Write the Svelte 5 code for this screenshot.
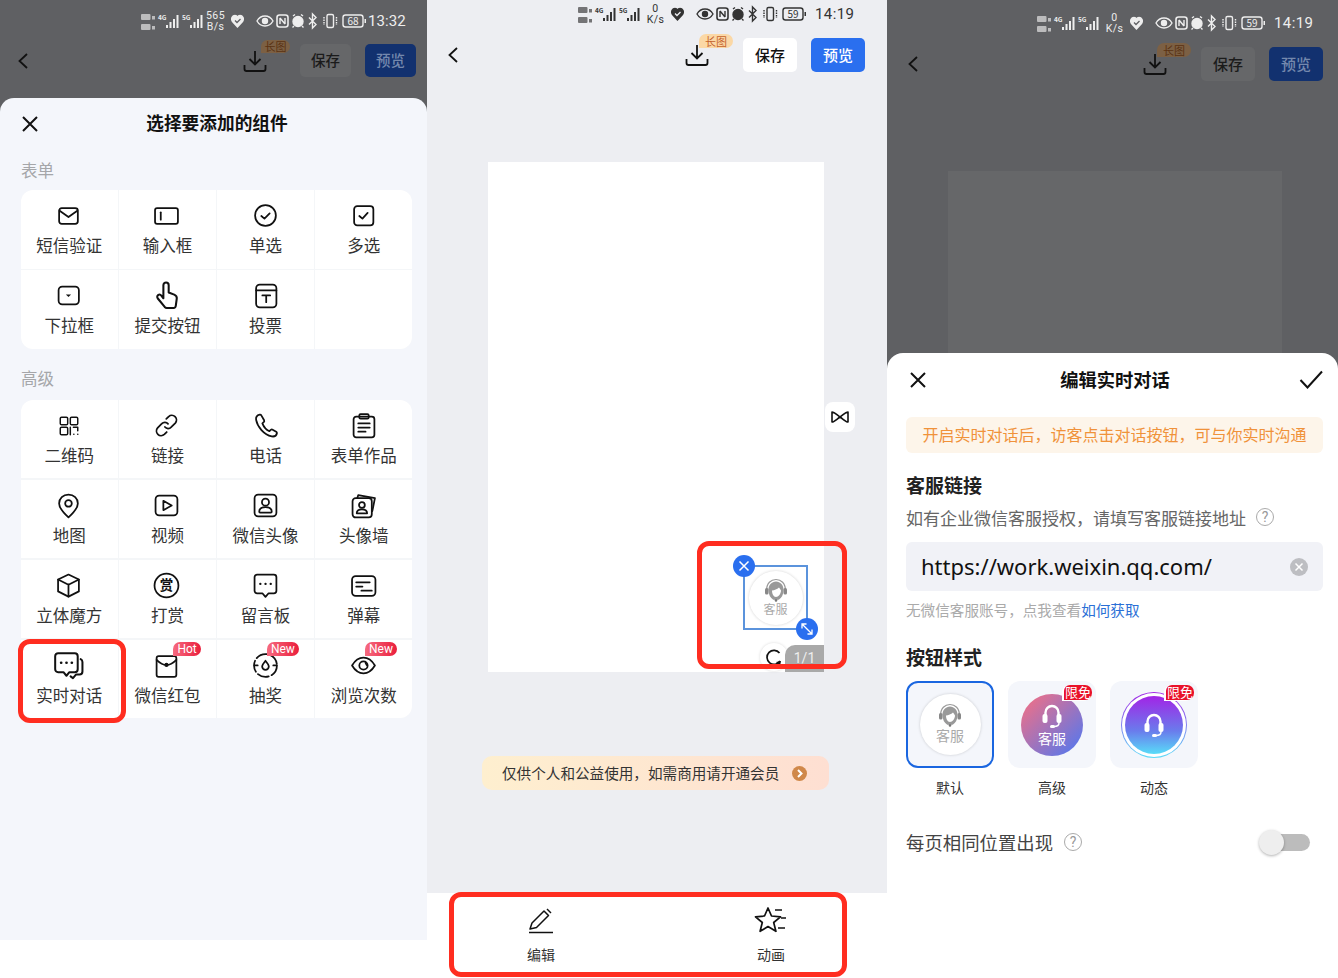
<script>
	const icons = {
		mail: '<rect x="3" y="5" width="18" height="15" rx="2.5"/><path d="M3.5 7.5l8.5 6 8.500-6"/>',
		input: '<rect x="1" y="5" width="22" height="15" rx="2"/><path d="M6.500 9v7"/>',
		radio: '<circle cx="12" cy="12" r="10"/><path d="M8 12.500l3 2.500 5-5"/>',
		check: '<rect x="3" y="3" width="18.500" height="18.500" rx="3"/><path d="M8 12.500l3 2.500 5-5.500"/>',
		select: '<rect x="2.500" y="3.500" width="19.500" height="17" rx="3.500"/><path d="M9.500 11h5l-2.500 2.500z" fill="currentColor" stroke="none"/>',
		hand: '<g transform="translate(-2 -2.500) scale(1.160)"><path d="M9.500 4a2.200 2.200 0 0 1 4.400 0v6l4.600 1.800c1.600.7 2.300 1.800 2.100 3.200l-.8 6c-.1 1.100-.9 1.800-1.900 1.800h-5.600c-.7 0-1.200-.3-1.700-.8l-5.700-7c-.8-1-.6-2.200.2-2.800s2-.5 2.700.4l1.700 2.200z"/></g>',
		vote: '<rect x="3" y="1.500" width="19.500" height="22" rx="3.500"/><path d="M3 7h19.500M9 12h7.500M12.700 12v6.500"/>',
		qr: '<g transform="translate(2 2) scale(.84)"><rect x="2.500" y="2.500" width="8.500" height="8.500" rx="1.500"/><rect x="14" y="2.500" width="8.500" height="8.500" rx="1.500"/><rect x="2.500" y="14" width="8.500" height="8.500" rx="1.500"/><path d="M14 14v8.500M17.500 14h5v4M18 22h.1M22.500 22h.1"/></g>',
		link: '<path d="M10.500 13.500a4 4 0 0 0 6 .2l4-4a4.500 4.500 0 0 0-6.400-6.300L11.800 5.700"/><path d="M13.500 10.500a4 4 0 0 0-6-.2l-4 4a4.500 4.500 0 0 0 6.400 6.300l2.300-2.300"/>',
		phone: '<path d="M6.500 1.500C4 2 2.500 3.700 3 6.700 4.200 13.200 10.500 21 18 22.500c2.700.4 4.600-1 5-3 .1-.7-.1-1.100-.7-1.500l-3.400-2c-.7-.4-1.200-.3-1.800.2l-1.300 1.300c-2.800-1.200-5.700-4.700-6.800-7.500l1.500-1.400c.4-.5.500-1 .2-1.600L8 2.300C7.700 1.700 7.200 1.400 6.500 1.500z"/>',
		clip: '<rect x="2.500" y="3.500" width="20" height="20" rx="2.500"/><rect x="8" y="1" width="9" height="4.500" rx="1.200"/><path d="M7 10h11M7 14h11M7 18h7"/>',
		pin: '<path d="M12 1.500C6.800 1.500 3 5.400 3 10c0 4.800 4.500 9.300 9 13.500 4.500-4.200 9-8.700 9-13.500 0-4.600-3.800-8.500-9-8.500z"/><circle cx="12" cy="10" r="3.200"/>',
		video: '<rect x="1.500" y="2.500" width="21" height="19" rx="3.500"/><path d="M9 7.500l8 4.500-8 4.500z"/>',
		avatar: '<rect x="1.500" y="1.500" width="21" height="21" rx="3.500"/><circle cx="12" cy="8.800" r="3.400"/><path d="M6 18c0-3 2.500-4.500 6-4.500s6 1.500 6 4.500c0 .5-.4.8-.8.8H6.800c-.4 0-.8-.3-.8-.8z"/>',
		wall: '<rect x="1.500" y="5" width="18.500" height="18.500" rx="3"/><path d="M6 5l1-3 16 3-2.500 12.500"/><circle cx="10.500" cy="11.500" r="2.800"/><path d="M5.500 19.500c0-2.500 2-3.700 5-3.700s5 1.200 5 3.700z"/>',
		cube: '<path d="M12 1.500l10 4.800v11.400l-10 5-10-5V6.300z"/><path d="M2 6.300l10 5 10-5M12 11.300v11.400"/>',
		reward: '<circle cx="12" cy="12" r="11.500"/><text x="12" y="16.500" font-size="13" text-anchor="middle" fill="currentColor" stroke="none" font-weight="700">赏</text>',
		msg: '<path d="M4 1.500h16c1.400 0 2.500 1.100 2.500 2.500v13c0 1.400-1.100 2.500-2.500 2.500h-5L12 23l-3-3.500H4c-1.400 0-2.500-1.100-2.500-2.500V4C1.500 2.600 2.600 1.500 4 1.500z"/><path d="M7 10.500h.1M12 10.500h.1M17 10.500h.1" stroke-width="2.200"/>',
		danmu: '<rect x="1" y="3" width="22.500" height="19" rx="3.500"/><path d="M5 9h13M5 13h6M10 17h10"/>',
		chat: '<g transform="translate(-2.500 -1.500) scale(1.140)"><path d="M4 1.500h14c1.400 0 2.500 1.100 2.500 2.500v11c0 1.400-1.100 2.500-2.500 2.500h-4.500L11 20.500l-2.500-3H4c-1.400 0-2.500-1.100-2.500-2.500V4C1.500 2.600 2.600 1.500 4 1.500z"/><path d="M6.500 9.500h.1M11 9.500h.1M15.500 9.500h.1" stroke-width="2.200"/><path d="M23 6.500c1 .5 1.500 1.300 1.500 2.500v8c0 1.400-1 2.500-2.500 2.500h-3l-2.500 3-2-1.500"/></g>',
		packet: '<path d="M4.500 3h15c1.100 0 2 .9 2 2v16c0 1.100-.9 2-2 2h-15c-1.100 0-2-.9-2-2V5c0-1.100.9-2 2-2z"/><path d="M2.500 6.500C6 10 9 11.500 12 11.500S18 10 21.500 6.500"/><circle cx="12" cy="11.500" r="1.200" fill="currentColor"/>',
		lottery: '<circle cx="12" cy="12" r="11" stroke-dasharray="11 3"/><path d="M12 7.500c-2 2.400-3.200 3.800-3.200 5.500a3.200 3.200 0 0 0 6.400 0c0-1.700-1.200-3.100-3.200-5.500z"/><path d="M1.500 12h3M19.500 12h3"/>',
		eye: '<path d="M1 12c3-5 6.800-7.500 11-7.500S20 7 23 12c-3 5-6.800 7.500-11 7.500S4 17 1 12z"/><circle cx="12" cy="12" r="4"/><path d="M14 9.500l1 2"/>'
	};

	const formItems = [
		{ icon: 'mail', label: '短信验证' },
		{ icon: 'input', label: '输入框' },
		{ icon: 'radio', label: '单选' },
		{ icon: 'check', label: '多选' },
		{ icon: 'select', label: '下拉框' },
		{ icon: 'hand', label: '提交按钮' },
		{ icon: 'vote', label: '投票' },
		{ icon: '', label: '' }
	];

	const advancedItems = [
		{ icon: 'qr', label: '二维码' },
		{ icon: 'link', label: '链接' },
		{ icon: 'phone', label: '电话' },
		{ icon: 'clip', label: '表单作品' },
		{ icon: 'pin', label: '地图' },
		{ icon: 'video', label: '视频' },
		{ icon: 'avatar', label: '微信头像' },
		{ icon: 'wall', label: '头像墙' },
		{ icon: 'cube', label: '立体魔方' },
		{ icon: 'reward', label: '打赏' },
		{ icon: 'msg', label: '留言板' },
		{ icon: 'danmu', label: '弹幕' },
		{ icon: 'chat', label: '实时对话' },
		{ icon: 'packet', label: '微信红包', tag: 'Hot' },
		{ icon: 'lottery', label: '抽奖', tag: 'New' },
		{ icon: 'eye', label: '浏览次数', tag: 'New' }
	];
</script>

{#snippet statusBar(cls, top, bottom, batt, time)}
	<div class="status {cls}">
		<svg class="sig" width="62" height="20" viewBox="0 0 62 20" fill="currentColor">
			<rect x="0" y="3" width="9.500" height="6" rx="1" opacity=".65" />
			<rect x="11" y="5" width="3" height="3.500" opacity=".65" />
			<rect x="0" y="13" width="9.500" height="6" rx="1" opacity=".65" />
			<rect x="11" y="15" width="3" height="3.500" opacity=".65" />
			<text x="17" y="9" font-size="6.500" font-weight="700">4G</text>
			<rect x="25" y="14" width="2" height="3" /><rect x="28.500" y="11" width="2" height="6" /><rect x="32" y="8" width="2" height="9" /><rect x="35.500" y="4" width="2" height="13" />
			<text x="41" y="9" font-size="6.500" font-weight="700">5G</text>
			<rect x="49" y="14" width="2" height="3" /><rect x="52.500" y="11" width="2" height="6" /><rect x="56" y="8" width="2" height="9" /><rect x="59.500" y="4" width="2" height="13" />
		</svg>
		<span class="speed"><span>{top}</span><span>{bottom}</span></span>
		<svg class="rest" width="136" height="20" viewBox="0 0 136 20" fill="none" stroke="currentColor" stroke-width="1.400">
			<path d="M6.500 16L1.500 10.500C-.5 7.500 1.500 4.500 4 4.500c1 0 2 .5 2.500 1.500.5-1 1.500-1.500 2.500-1.500 2.500 0 4.500 3 2.500 6z" fill="currentColor" />
			<path d="M4 9.500l2 2 3.500-3.500" stroke-width="1.300" class="heart-check" />
			<path d="M26 10c2-3.500 4.800-5 8-5s6 1.500 8 5c-2 3.500-4.800 5-8 5s-6-1.500-8-5z" />
			<circle cx="34" cy="10" r="2.500" fill="currentColor" />
			<rect x="46" y="4" width="11" height="12" rx="2.500" stroke-width="1.600" />
			<path d="M49 7v6M54 7v6M49 7l5 6" />
			<circle cx="67" cy="10.500" r="5" fill="currentColor" />
			<path d="M62 5l2-1.500M72 5l-2-1.500M63 15l-1.500 1.500M71 15l1.500 1.500" />
			<path d="M78 6.500l7 7-3.500 3.500V3l3.500 3.500-7 7" />
			<rect x="96" y="3.500" width="6.500" height="13" rx="1.500" />
			<path d="M93 6v8M105.500 6v8" stroke-dasharray="1.500 1" />
			<rect x="112" y="4" width="20" height="12" rx="2.500" />
			<rect x="133.500" y="8" width="1.500" height="4" fill="currentColor" stroke="none" />
			<text x="122" y="13.500" font-size="10" text-anchor="middle" fill="currentColor" stroke="none">{batt}</text>
		</svg>
		<span class="time">{time}</span>
	</div>
{/snippet}

{#snippet appHead(cls)}
	<div class="head {cls}">
		<svg class="back" width="12" height="18" viewBox="0 0 12 18" fill="none" stroke="currentColor" stroke-width="1.800"><path d="M10 2L2.500 9l7.500 7" /></svg>
		<div class="dl">
			<svg width="24" height="24" viewBox="0 0 24 24" fill="none" stroke="currentColor" stroke-width="1.800"><path d="M12 2v13M6.500 10l5.500 5.500 5.500-5.500M1.500 16v4c0 1.200.8 2 2 2h17c1.200 0 2-.8 2-2v-4" /></svg>
			<span class="long">长图</span>
		</div>
		<span class="btn save">保存</span>
		<span class="btn preview">预览</span>
	</div>
{/snippet}

{#snippet widgetGrid(items)}
	<div class="grid">
		{#each items as item}
			<div class="cell">
				{#if item.icon}
					<svg class="cell-icon" width="26" height="26" viewBox="0 0 25 25" fill="none" stroke="currentColor" stroke-width="1.700" stroke-linecap="round" stroke-linejoin="round">{@html icons[item.icon]}</svg>
					<span>{item.label}</span>
				{/if}
				{#if item.tag}
					<em class="tag">{item.tag}</em>
				{/if}
			</div>
		{/each}
	</div>
{/snippet}

{#snippet agent(size)}
	<div class="agent" style="width:{size}px;height:{size}px">
		<svg width="26" height="24" viewBox="0 0 26 24">
			<path d="M3.500 13C3.500 5 8 1.500 13 1.500s9.500 3.500 9.500 11.500" fill="none" stroke="#999" stroke-width="1.200" />
			<path d="M5.500 13C5 7 9 3.500 13 3.500s8 3.500 7.500 9.500c-.3 4-2 7-4.500 8.500-1 .6-5 .6-6 0-2.500-1.500-4.200-4.500-4.500-8.500z" fill="#999" />
			<path d="M9 12.500c2.500-.2 5-1.200 7-3 .8 1 1.500 2 2 3 0 3-2.500 6.500-5 6.500s-4-3-4-6.500z" fill="#fff" />
			<rect x="2" y="10" width="3.500" height="6.500" rx="1.500" fill="#888" />
			<rect x="20.500" y="10" width="3.500" height="6.500" rx="1.500" fill="#888" />
			<circle cx="13" cy="22.500" r="1.300" fill="#777" />
		</svg>
		<span>客服</span>
	</div>
{/snippet}

{#snippet headset(size)}
	<svg width={size} height={size} viewBox="0 0 26 26" fill="none">
		<path d="M6.500 12V9.500a6.500 6.500 0 0 1 13 0V12" stroke="#fff" stroke-width="2.400" />
		<rect x="3.500" y="11" width="5" height="9" rx="2" fill="#fff" />
		<rect x="17.500" y="11" width="5" height="9" rx="2" fill="#fff" />
		<path d="M20 20c0 2.500-2 3.500-5 3.500" stroke="#fff" stroke-width="1.500" />
		<rect x="11" y="22" width="5" height="3" rx="1.500" fill="#fff" />
	</svg>
{/snippet}

<div class="screen">
	<section class="phone p1">
		<div class="dim">
			{@render statusBar('s1', '565', 'B/s', '68', '13:32')}
			{@render appHead('h1')}
		</div>
		<div class="sheet-list">
			<div class="list-title">
				<svg width="20" height="20" viewBox="0 0 20 20" fill="none" stroke="#111" stroke-width="2"><path d="M3 3l14 14M17 3L3 17" /></svg>
				<h2>选择要添加的组件</h2>
			</div>
			<h3>表单</h3>
			{@render widgetGrid(formItems)}
			<h3 class="second">高级</h3>
			{@render widgetGrid(advancedItems)}
			<div class="mark mark-chat"></div>
		</div>
	</section>

	<section class="phone p2">
		{@render statusBar('s2', '0', 'K/s', '59', '14:19')}
		{@render appHead('h2')}
		<div class="canvas">
			<div class="float-btn">
				<svg width="20" height="14" viewBox="0 0 20 14" fill="none" stroke="#111" stroke-width="1.600" stroke-linejoin="round"><path d="M2 2c2.500 0 5 3 8 5 3-2 5.500-5 8-5v10c-2.500 0-5-3-8-5-3 2-5.500 5-8 5z" /></svg>
			</div>
			<div class="selection">
				{@render agent(54)}
				<span class="handle close">
					<svg width="12" height="12" viewBox="0 0 12 12" stroke="#fff" stroke-width="1.500"><path d="M1.500 1.500l9 9M10.500 1.500l-9 9" /></svg>
				</span>
				<span class="handle resize">
					<svg width="14" height="14" viewBox="0 0 14 14" fill="none" stroke="#fff" stroke-width="1.300"><path d="M2 2l10 10M2 6.500V2h4.500M12 7.500V12H7.500" /></svg>
				</span>
			</div>
			<span class="rotate">
				<svg width="20" height="20" viewBox="0 0 20 20" fill="none" stroke="#111" stroke-width="1.700"><path d="M15.500 6A7 7 0 1 0 16 14" /><path d="M12 15l5-1-1 5z" fill="#111" stroke="none" /></svg>
			</span>
			<span class="pager">1/1</span>
		</div>
		<div class="notice-vip">
			<span>仅供个人和公益使用，如需商用请开通会员</span>
			<svg width="15" height="15" viewBox="0 0 15 15"><circle cx="7.500" cy="7.500" r="7.500" fill="#d0884a" /><path d="M6 4l3.500 3.500L6 11" fill="none" stroke="#fff" stroke-width="2" /></svg>
		</div>
		<div class="tools">
			<div class="tool">
				<svg width="28" height="28" viewBox="0 0 28 28" fill="none" stroke="#111" stroke-width="1.500" stroke-linejoin="round"><path d="M3 23l2-6L17 5l4.500 4.500L9.500 21.500z" /><path d="M20 3l4 4" /><path d="M2 26.500h24" /></svg>
				<span>编辑</span>
			</div>
			<div class="tool">
				<svg width="34" height="28" viewBox="0 0 34 28" fill="none" stroke="#111" stroke-width="1.700" stroke-linejoin="round"><path d="M14 2l3.500 8 9 .8-6.800 5.700 2.200 8.800L14 20.500 6.100 25.300l2.200-8.800L1.500 10.800l9-.8z" /><path d="M21 4h7M27 12h5M24 22h7" /></svg>
				<span>动画</span>
			</div>
			<div class="mark mark-tools"></div>
		</div>
		<div class="mark mark-selection"></div>
	</section>

	<section class="phone p3">
		<div class="dim">
			{@render statusBar('s3', '0', 'K/s', '59', '14:19')}
			{@render appHead('h3')}
			<div class="canvas-dim"></div>
		</div>
		<div class="sheet-edit">
			<div class="edit-title">
				<svg width="20" height="20" viewBox="0 0 20 20" fill="none" stroke="#111" stroke-width="2"><path d="M3 3l14 14M17 3L3 17" /></svg>
				<h2>编辑实时对话</h2>
				<svg width="24" height="20" viewBox="0 0 24 20" fill="none" stroke="#111" stroke-width="2"><path d="M1.500 10l7 7.500L23 1.500" /></svg>
			</div>
			<p class="tip">开启实时对话后，访客点击对话按钮，可与你实时沟通</p>
			<h4>客服链接</h4>
			<div class="desc">
				<span>如有企业微信客服授权，请填写客服链接地址</span>
				<span class="help">?</span>
			</div>
			<div class="url-field">
				<span>https://work.weixin.qq.com/</span>
				<svg width="18" height="18" viewBox="0 0 18 18"><circle cx="9" cy="9" r="9" fill="#bdbec2" /><path d="M5.500 5.500l7 7M12.500 5.500l-7 7" stroke="#fff" stroke-width="1.500" /></svg>
			</div>
			<p class="hint">无微信客服账号，点我查看<a href="#top">如何获取</a></p>
			<h4 class="style-title">按钮样式</h4>
			<div class="styles">
				<div class="style-opt">
					<div class="tile active">{@render agent(61)}</div>
					<span>默认</span>
				</div>
				<div class="style-opt">
					<div class="tile">
						<div class="round grad">
							{@render headset(26)}
							<span>客服</span>
						</div>
						<em class="free">限免</em>
					</div>
					<span>高级</span>
				</div>
				<div class="style-opt">
					<div class="tile">
						<div class="ring">
							<div class="round dyn">{@render headset(26)}</div>
						</div>
						<em class="free">限免</em>
					</div>
					<span>动态</span>
				</div>
			</div>
			<div class="same-pos">
				<span>每页相同位置出现</span>
				<span class="help">?</span>
				<div class="toggle"><i></i></div>
			</div>
		</div>
	</section>
</div>

<style>
	:global(body) {
		margin: 0;
		background: #fff;
	}
	.screen {
		display: flex;
		width: 1338px;
		height: 978px;
		overflow: hidden;
		font-family: 'Noto Sans CJK SC', 'Noto Sans', sans-serif;
		color: #222;
	}
	.phone {
		position: relative;
		display: flex;
		flex-direction: column;
		height: 978px;
		box-sizing: border-box;
	}
	.p1 {
		width: 427px;
		background: #fff;
	}
	.p2 {
		width: 460px;
		background: #edeef2;
	}
	.p3 {
		width: 451px;
		background: #fff;
	}
	.dim {
		background: #5f6063;
		display: flow-root;
	}

	/* status bar */
	.status {
		display: flex;
		align-items: center;
		color: #eee;
	}
	.s1 {
		height: 42px;
		padding-left: 141px;
	}
	.s2 {
		height: 28px;
		padding-left: 151px;
		color: #333;
	}
	.s3 {
		height: 46px;
		padding-left: 150px;
	}
	.speed {
		display: flex;
		flex-direction: column;
		align-items: center;
		width: 17px;
		margin-left: 4px;
		font: 10.500px/11px Roboto, sans-serif;
		letter-spacing: 0.4px;
	}
	.s2 .speed,
	.s3 .speed {
		margin-left: 7px;
	}
	.rest {
		margin-left: 7px;
	}
	.heart-check {
		stroke: #5f6063;
	}
	.s2 .heart-check {
		stroke: #edeef2;
	}
	.time {
		margin-left: 1px;
		font: 15px Roboto, sans-serif;
		letter-spacing: 0.1px;
	}
	.s2 .time,
	.s3 .time {
		margin-left: 8px;
		letter-spacing: 0.4px;
	}

	/* app header */
	.head {
		display: flex;
		align-items: center;
		height: 34px;
		color: #111;
	}
	.back {
		flex: none;
		margin-right: auto;
	}
	.dl {
		position: relative;
		height: 24px;
		line-height: 0;
	}
	.long {
		position: absolute;
		left: 14px;
		top: -9px;
		width: 34px;
		height: 14px;
		border-radius: 7px 7px 7px 0;
		background: #fbd8a6;
		color: #c5622c;
		font-size: 11px;
		line-height: 14px;
		text-align: center;
	}
	.btn {
		height: 34px;
		width: 54px;
		border-radius: 5px;
		margin-left: 14px;
		font-size: 15px;
		font-weight: 500;
		line-height: 33px;
		text-align: center;
	}
	.save {
		background: #fff;
		margin-left: 34px;
	}
	.preview {
		background: #2a6fef;
		color: #fff;
	}
	.h1 .save,
	.h3 .save {
		background: #666769;
		color: #1b1b1b;
	}
	.h1 .preview,
	.h3 .preview {
		background: #12316f;
		color: #7488ad;
	}
	.h1 .long,
	.h3 .long {
		background: #7c6044;
		color: #5a3212;
	}
	.h1 {
		margin: 2px 0 35px;
		padding: 0 11px 0 17px;
		height: 33px;
	}
	.h1 .btn {
		width: 51px;
		height: 33px;
		line-height: 32px;
		font-size: 14.500px;
	}
	.h1 .save {
		margin-left: 33px;
	}
	.h1 .long {
		width: 29px;
		left: 18px;
		top: -9px;
		height: 13px;
		line-height: 13px;
	}
	.h2 {
		margin-top: 10px;
		padding: 0 22px 0 20px;
	}
	.h3 {
		margin-top: 1px;
		padding: 0 15px 0 20px;
	}

	/* component picker */
	.sheet-list {
		height: 842px;
		margin-top: -14px;
		box-sizing: border-box;
		padding: 0 15px 0 21px;
		background: #f4f6fb;
		border-radius: 14px 14px 0 0;
	}
	.list-title {
		position: relative;
		display: flex;
		align-items: center;
		justify-content: center;
		height: 52px;
		margin-left: -1px;
	}
	.list-title svg {
		position: absolute;
		left: 0;
	}
	.list-title h2 {
		margin: 0 0 0 2px;
		padding-bottom: 4px;
		font-size: 17.700px;
		font-weight: 700;
		color: #111;
	}
	h3 {
		margin: 10px 0 9px;
		height: 21px;
		font-size: 16.500px;
		font-weight: 400;
		line-height: 21px;
		color: #a5a6a9;
	}
	h3.second {
		margin: 19px 0 11px;
	}
	.grid {
		display: grid;
		grid-template-columns: repeat(4, 1fr);
		gap: 1.500px;
		background: #f4f6f8;
		border-radius: 12px;
		overflow: hidden;
	}
	.cell {
		position: relative;
		display: flex;
		flex-direction: column;
		align-items: center;
		height: 78.500px;
		background: #fff;
		font-size: 16.500px;
		color: #333;
	}
	.cell-icon {
		margin-top: 13px;
		color: #111;
		overflow: visible;
	}
	.cell span {
		margin-top: 4px;
		line-height: 24px;
	}
	.tag {
		position: absolute;
		right: 15px;
		top: 2px;
		height: 14px;
		padding: 0 4px;
		border-radius: 7px 7px 7px 0;
		background: linear-gradient(90deg, #f66a80, #ea1f3c);
		color: #fff;
		font: 400 12px/14px Roboto, sans-serif;
		font-style: normal;
	}
	.mark {
		position: absolute;
		box-sizing: border-box;
		border: 5.500px solid #ff2d20;
		border-radius: 12px;
		pointer-events: none;
	}
	.mark-chat {
		left: 18px;
		top: 639px;
		width: 108px;
		height: 84px;
	}

	/* editor */
	.canvas {
		position: relative;
		width: 336px;
		height: 510px;
		margin: 90px 0 0 61px;
		background: #fff;
	}
	.float-btn {
		position: absolute;
		left: 337px;
		top: 240px;
		display: flex;
		align-items: center;
		justify-content: center;
		width: 30px;
		height: 30px;
		border-radius: 8px;
		background: #fff;
	}
	.selection {
		position: absolute;
		left: 255px;
		top: 403px;
		display: flex;
		align-items: center;
		justify-content: center;
		box-sizing: border-box;
		width: 65px;
		height: 65px;
		border: 2px solid #5b93dc;
	}
	.agent {
		flex: none;
		display: flex;
		flex-direction: column;
		align-items: center;
		justify-content: center;
		box-sizing: border-box;
		border-radius: 50%;
		background: #fff;
		box-shadow: 0 0 3px rgba(0, 0, 0, 0.18);
		color: #aaa;
		font-size: 12px;
		line-height: 14px;
	}
	.agent svg {
		margin-top: -1px;
	}
	.tile .agent {
		font-size: 14px;
		line-height: 17px;
		padding-bottom: 1px;
	}
	.handle {
		position: absolute;
		display: flex;
		align-items: center;
		justify-content: center;
		width: 22px;
		height: 22px;
		border-radius: 50%;
		background: #2a6fef;
	}
	.close {
		left: -12px;
		top: -12px;
	}
	.resize {
		right: -12px;
		bottom: -12px;
	}
	.rotate {
		position: absolute;
		left: 272px;
		top: 481px;
		display: flex;
		align-items: center;
		justify-content: center;
		width: 28px;
		height: 28px;
		border-radius: 50%;
		background: #fff;
		box-shadow: 0 0 3px rgba(0, 0, 0, 0.15);
	}
	.pager {
		position: absolute;
		right: 0;
		bottom: 0;
		width: 39px;
		height: 27px;
		border-radius: 10px 0 0 0;
		background: #a9a9a9;
		color: #eee;
		font: 14px/27px Roboto, sans-serif;
		text-align: center;
	}
	.notice-vip {
		display: flex;
		align-items: center;
		justify-content: space-between;
		box-sizing: border-box;
		width: 347px;
		height: 34px;
		margin: 84px 0 0 55px;
		padding: 0 22px 0 20px;
		border-radius: 10px;
		background: linear-gradient(90deg, #feefcf, #fedfd2);
		font-size: 14.600px;
		color: #333;
	}
	.notice-vip span {
		margin-top: -2px;
	}
	.tools {
		display: flex;
		justify-content: space-between;
		box-sizing: border-box;
		height: 85px;
		margin-top: auto;
		padding: 13px 98px 0 96px;
		background: #fff;
	}
	.tool {
		display: flex;
		flex-direction: column;
		align-items: center;
		width: 36px;
		font-size: 14px;
		color: #333;
	}
	.tool span {
		margin-top: 10px;
	}
	.mark-tools {
		left: 22px;
		top: 892px;
		width: 398px;
		height: 85px;
	}
	.mark-selection {
		left: 270px;
		top: 541px;
		width: 150px;
		height: 128px;
	}

	/* edit sheet */
	.canvas-dim {
		width: 334px;
		height: 198px;
		margin: 90px 0 0 61px;
		background: #666769;
	}
	.sheet-edit {
		position: relative;
		flex: 1;
		margin-top: -16px;
		padding: 0 15px 0 19px;
		background: #fff;
		border-radius: 16px 16px 0 0;
	}
	.edit-title {
		display: flex;
		align-items: center;
		justify-content: space-between;
		height: 54px;
		padding-left: 2px;
	}
	.edit-title h2 {
		margin: 0 0 0 3px;
		padding-bottom: 2px;
		font-size: 18.300px;
		font-weight: 700;
		color: #111;
	}
	.tip {
		margin: 10px 0 0;
		height: 36px;
		border-radius: 6px;
		background: #fdf5ea;
		color: #f0923a;
		font-size: 16px;
		line-height: 34px;
		text-align: center;
	}
	h4 {
		margin: 20px 0 0;
		font-size: 19px;
		font-weight: 700;
		line-height: 24px;
		color: #222;
	}
	.desc {
		display: flex;
		align-items: center;
		gap: 10px;
		height: 24px;
		margin-top: 8px;
		font-size: 17px;
		color: #666;
	}
	.help {
		flex: none;
		width: 16px;
		height: 16px;
		border: 1.300px solid #aaa;
		border-radius: 50%;
		color: #999;
		font: 14px/16px Roboto, sans-serif;
		text-align: center;
	}
	.url-field {
		display: flex;
		align-items: center;
		justify-content: space-between;
		height: 49px;
		margin-top: 13px;
		padding: 0 15px;
		border-radius: 6px;
		background: #f1f2f7;
		font: 22px 'Noto Sans', sans-serif;
		color: #111;
	}
	.url-field span {
		margin-top: -2px;
	}
	.hint {
		margin: 9px 0 0;
		font-size: 14.600px;
		line-height: 20px;
		color: #aaa;
	}
	.hint a {
		color: #2a6fd6;
		text-decoration: none;
	}
	h4.style-title {
		margin-top: 25px;
	}
	.styles {
		display: flex;
		gap: 14px;
		margin-top: 12px;
	}
	.style-opt {
		display: flex;
		flex-direction: column;
		align-items: center;
		font-size: 14px;
		color: #333;
	}
	.style-opt > span {
		margin-top: 9px;
		line-height: 20px;
	}
	.tile {
		position: relative;
		display: flex;
		align-items: center;
		justify-content: center;
		box-sizing: border-box;
		width: 88px;
		height: 87px;
		border-radius: 12px;
		background: #f4f6fb;
	}
	.tile.active {
		border: 2.500px solid #1a66e0;
	}
	.round {
		display: flex;
		flex-direction: column;
		align-items: center;
		justify-content: center;
		box-sizing: border-box;
		width: 62px;
		height: 62px;
		border-radius: 50%;
		color: #fff;
	}
	.grad {
		background: linear-gradient(135deg, #fb6f7f, #4a78f5);
		font-size: 14px;
		line-height: 18px;
		padding-top: 1px;
	}
	.ring {
		display: flex;
		align-items: center;
		justify-content: center;
		box-sizing: border-box;
		width: 66px;
		height: 66px;
		border-radius: 50%;
		border: 1.500px solid transparent;
		background-image: linear-gradient(#fff, #fff), linear-gradient(180deg, #a224e6, #5cdcf8);
		background-origin: border-box;
		background-clip: padding-box, border-box;
	}
	.dyn {
		width: 58px;
		height: 58px;
		background: linear-gradient(180deg, #a224e6, #6a7bec 60%, #58dcf8);
	}
	.free {
		position: absolute;
		right: 4px;
		top: 4px;
		width: 28px;
		height: 15px;
		border-radius: 6px 7px 7px 0;
		background: #e9122a;
		color: #fff;
		font-size: 13px;
		font-style: normal;
		line-height: 14px;
		text-align: center;
		box-shadow: -2px 1px 0 #fff;
	}
	.same-pos {
		display: flex;
		align-items: center;
		gap: 11px;
		height: 30px;
		margin-top: 30px;
		font-size: 18.400px;
		color: #444;
	}
	.toggle {
		position: relative;
		width: 40px;
		height: 17px;
		margin-left: auto;
		margin-right: 13px;
		border-radius: 9px;
		background: #bcbcbc;
	}
	.toggle i {
		position: absolute;
		left: -11px;
		top: -4px;
		width: 25px;
		height: 25px;
		border-radius: 50%;
		background: #eee;
		box-shadow: 0 1px 3px rgba(0, 0, 0, 0.3);
	}
</style>
